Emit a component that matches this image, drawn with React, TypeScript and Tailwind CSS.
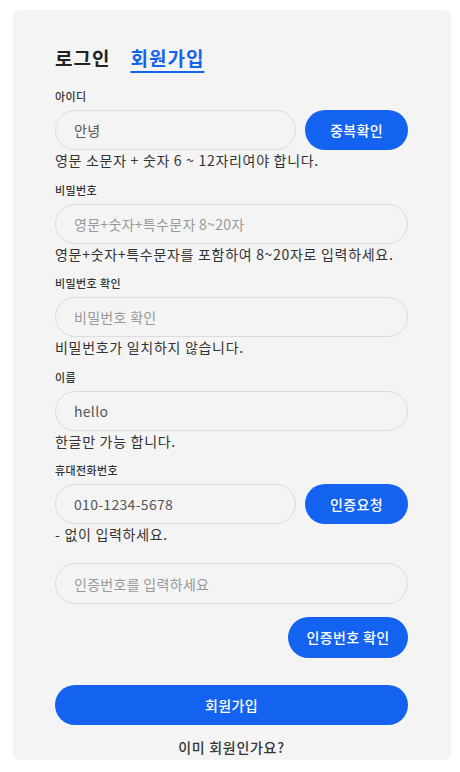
import { useState } from 'react';

const font = { fontFamily: '"Noto Sans CJK KR", "Noto Sans", sans-serif' };

function Field({
  label,
  children,
  help,
  first,
}: {
  label: string;
  children: React.ReactNode;
  help?: string;
  first?: boolean;
}) {
  return (
    <div className={first ? 'mt-4' : 'mt-[11.5px]'}>
      <label className="block text-[11px] leading-4 font-medium tracking-[0.4px] text-[#333]">{label}</label>
      <div className="mt-1.5">{children}</div>
      {help && <p className="text-[14px] leading-5 tracking-[0.7px] text-[#333]">{help}</p>}
    </div>
  );
}

const inputCls =
  'h-10 w-full rounded-full border border-[#dcdcdc] bg-[#f4f4f4] px-[18px] text-[14px] tracking-[0.3px] text-[#555] placeholder:text-[#999] outline-none';
const btnCls =
  'h-10 shrink-0 rounded-full bg-[#1463f0] text-[14px] font-medium tracking-[0.4px] text-white';

export default function App() {
  const [id, setId] = useState('안녕');
  const [name, setName] = useState('hello');
  const [phone, setPhone] = useState('010-1234-5678');

  return (
    <div className="min-h-screen bg-white pt-[10px]" style={font}>
      <div className="ml-[13px] w-[438px] rounded-md bg-[#f4f4f4] pl-[42px] pr-[43px] pt-[34px] pb-[3px]">
        <div className="flex h-7 items-center gap-[20px] text-[19px] font-bold tracking-[1px]">
          <span className="text-[#222]">로그인</span>
          <span className="text-[#1463f0] underline decoration-2 underline-offset-[5px]">회원가입</span>
        </div>

        <Field label="아이디" help="영문 소문자 + 숫자 6 ~ 12자리여야 합니다." first>
          <div className="flex gap-[9px]">
            <input className={inputCls} value={id} onChange={(e) => setId(e.target.value)} />
            <button className={`${btnCls} w-[103px]`}>중복확인</button>
          </div>
        </Field>

        <Field label="비밀번호" help="영문+숫자+특수문자를 포함하여 8~20자로 입력하세요.">
          <input type="password" className={inputCls} placeholder="영문+숫자+특수문자 8~20자" />
        </Field>

        <Field label="비밀번호 확인" help="비밀번호가 일치하지 않습니다.">
          <input type="password" className={inputCls} placeholder="비밀번호 확인" />
        </Field>

        <Field label="이름" help="한글만 가능 합니다.">
          <input className={inputCls} value={name} onChange={(e) => setName(e.target.value)} />
        </Field>

        <Field label="휴대전화번호" help="- 없이 입력하세요.">
          <div className="flex gap-[9px]">
            <input className={inputCls} value={phone} onChange={(e) => setPhone(e.target.value)} />
            <button className={`${btnCls} w-[103px]`}>인증요청</button>
          </div>
        </Field>

        <input className={`${inputCls} mt-[19px] h-[41px]`} placeholder="인증번호를 입력하세요" />

        <div className="mt-[13px] flex justify-end">
          <button className={`${btnCls} h-[41px] w-[120px]`}>인증번호 확인</button>
        </div>

        <button className={`${btnCls} mt-[27px] w-full`}>회원가입</button>

        <p className="mt-3 text-center text-[14px] leading-5 font-medium tracking-[0.7px] text-[#333]">
          이미 회원인가요?
        </p>
      </div>
    </div>
  );
}
